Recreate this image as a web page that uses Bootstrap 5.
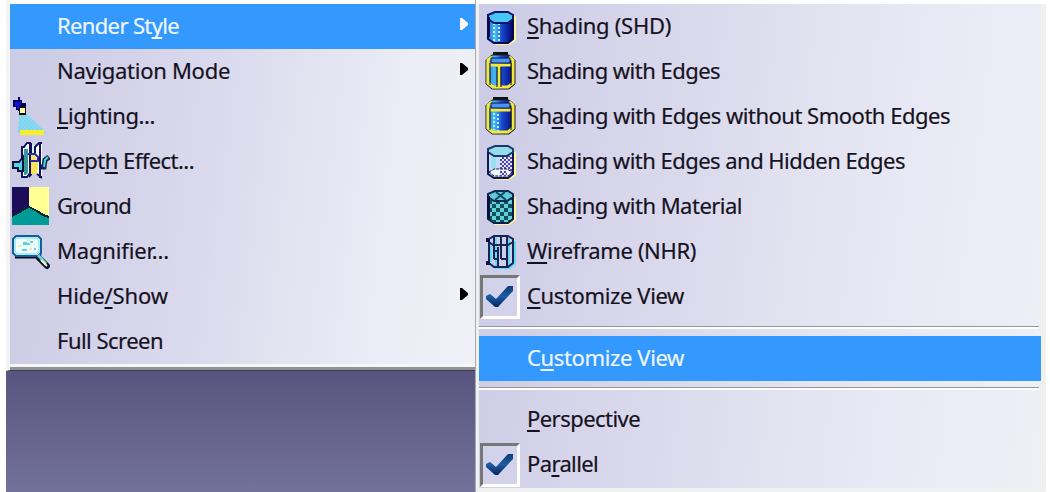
<!DOCTYPE html>
<html lang="en">
<head>
  <meta charset="UTF-8">
  <title>Render Style</title>
  <meta name="viewport" content="width=device-width, initial-scale=1">
  <link href="https://cdn.jsdelivr.net/npm/bootstrap@5.3.3/dist/css/bootstrap.min.css" rel="stylesheet">
  <style>
    body {
      background-color: #fff;
      font-family: "Noto Sans", "Open Sans", sans-serif;
      font-size: 22px;
      line-height: 43px;
      color: #15121f;
    }

    .screen {
      width: 1046px;
      height: 492px;
      padding-left: 6px;
    }

    .left-side {
      width: 469px;
      background: linear-gradient(#58547f 370px, #73729a 492px);
    }

    .main-menu {
      height: 371px;
      padding-top: 4px;
      border-left: 4px solid #f4f4f4;
      border-bottom: 1px solid #3e3b59;
      background: #fff;
    }

    .main-rows {
      height: 360px;
      background: linear-gradient(97deg, #cdcce6 5%, #d9d8ec 40%, #ececf6 80%, #f0f0f8);
    }

    .menu-edge {
      height: 6px;
      border-top: 3px solid #f6f6f6;
      border-bottom: 3px solid #929292;
    }

    .sub-menu {
      padding-top: 4px;
      border-left: 1px solid #aaa;
      background: linear-gradient(#fff 4px, #f0f0f0 4px);
    }

    .sub-rows {
      height: 484px;
      margin-left: 3px;
      margin-right: 5px;
      background: linear-gradient(97deg, #cdcce6 3%, #dad9ec 35%, #e8e8f4 70%, #efeff8);
    }

    .menu-row {
      height: 45px;
      white-space: nowrap;
      -webkit-text-stroke: .2px;
    }

    .menu-row.active {
      background: #3399ff;
      color: #eef6ff;
    }

    .menu-row svg {
      flex: none;
    }

    .icon-box {
      width: 47px;
      height: 45px;
      flex: none;
      line-height: 0;
    }

    .sub-rows .icon-box {
      width: 48px;
      padding-left: 1px;
    }

    .menu-row u {
      text-decoration-thickness: 2px;
      text-underline-offset: 3px;
      text-decoration-skip-ink: none;
    }

    .arrow {
      margin: 14px 7px 0 auto;
    }

    .tick-box {
      width: 40px;
      height: 44px;
      margin-top: 1px;
      border: 3px solid #fff;
      border-top-color: #777;
      border-left-color: #777;
      background: #d2d2eb;
    }

    .menu-line {
      height: 17px;
      padding: 7px 2px 0 0;
    }

    .menu-line.after {
      height: 16px;
      padding-top: 6px;
    }

    .menu-line div {
      height: 3px;
      border-top: 1px solid #969696;
      background: #fff;
    }
  </style>
</head>
<body>

<svg width="0" height="0" class="position-absolute">
  <defs>
    <linearGradient id="blueSide">
      <stop offset="0" stop-color="#2878dc"/>
      <stop offset=".3" stop-color="#48b8f4"/>
      <stop offset=".55" stop-color="#1648d0"/>
      <stop offset="1" stop-color="#060468"/>
    </linearGradient>
    <linearGradient id="tickFill" x2="0" y2="1">
      <stop offset="0" stop-color="#103c70"/>
      <stop offset=".5" stop-color="#1c5ca4"/>
      <stop offset="1" stop-color="#08255c"/>
    </linearGradient>
    <pattern id="dots" width="4" height="4" patternUnits="userSpaceOnUse">
      <path fill="#7ce0f4" d="M0 0h4v4H0z"/>
      <path fill="#8fcdec" d="M0 0h2v2H0zM2 2h2v2H2z"/>
    </pattern>
    <pattern id="mesh" width="4" height="4" patternUnits="userSpaceOnUse">
      <path fill="#e8e6fa" d="M0 0h4v4H0z"/>
      <path fill="#4940b4" d="M0 0h2v2H0zM2 2h2v2H2z"/>
    </pattern>
    <pattern id="checks" width="8" height="8" patternUnits="userSpaceOnUse">
      <path fill="#63d0d8" d="M0 0h8v8H0z"/>
      <path fill="#11515f" d="M0 0h4v4H0zM4 4h4v4H4z"/>
    </pattern>
  </defs>
</svg>

<div class="screen d-flex">
  <div class="left-side">
    <div class="main-menu">
      <div class="main-rows">
        <div class="menu-row d-flex active">
          <div class="icon-box"></div>
          <span data-width="122">Render St<u>y</u>le</span>
          <svg class="arrow" width="8" height="13"><path fill="#fff" d="M0 0h2l6 5v2l-6 5H0z"/></svg>
        </div>
        <div class="menu-row d-flex">
          <div class="icon-box"></div>
          <span data-width="173">Na<u>v</u>igation Mode</span>
          <svg class="arrow" width="8" height="13"><path d="M0 0h2l6 5v2l-6 5H0z"/></svg>
        </div>
        <div class="menu-row d-flex">
          <div class="icon-box">
            <!-- spot light -->
            <svg width="40" height="45">
              <path fill="url(#dots)" d="M9 20h8l20 19H8z"/>
              <path fill="#f8ee30" d="M10 36h24v5H10z"/>
              <path fill="#000060" d="M8 3h2v3h2v3h4v8H8v-1H6v-3H3V6h5z"/>
              <path fill="#1010d8" d="M5 8h6v3H9v4H7v-3H5z"/>
              <path fill="#111" d="M9 12h7v9H9z"/>
              <path fill="#fffbb0" d="M10 14h5v5h-5z"/>
            </svg>
          </div>
          <span data-width="98"><u>L</u>ighting...</span>
        </div>
        <div class="menu-row d-flex">
          <div class="icon-box">
            <!-- sliced box -->
            <svg width="40" height="45">
              <path fill="#fff" stroke="#11115c" stroke-width="2" d="M12 8h2l3-4h3v30l-3 4h-5z"/>
              <path fill="#38989c" d="M14 10h4v24l-2 2h-2z"/>
              <path fill="#11115c" d="M19 4h3v32l-3 3z"/>
              <path fill="#d4f3f6" d="M22 6h4v10h-4z"/>
              <path fill="#f8e35c" d="M21 16h8v19h-8z"/>
              <path fill="#fff" stroke="#11115c" stroke-width="2" d="M25 14V8l4-4h2v34l-4-3"/>
              <path fill="#11115c" d="M29 4h3v35h-3z"/>
              <path fill="#fff" d="M31 5h1v32h-1z"/>
              <path fill="#f8e35c" d="M21 19h7v12h-7z"/>
              <path fill="none" stroke="#2828b0" stroke-width="2" d="M18 15h7l3 3v4h-8"/>
              <path fill="#50d4e0" stroke="#101040" stroke-width="2" d="M3 23h6l4-5v14H8v-3H3z"/>
              <path fill="none" stroke="#102848" stroke-width="5" d="M39 18l-4 3-1 7h-3"/>
              <path fill="none" stroke="#50d4e0" stroke-width="2" d="M38 18l-3 3-1 7"/>
            </svg>
          </div>
          <span data-width="137">Dept<u>h</u> Effect...</span>
        </div>
        <div class="menu-row d-flex">
          <div class="icon-box">
            <svg width="40" height="45" shape-rendering="crispEdges">
              <path fill="#1b0d59" d="M2 3h17v31H2z"/>
              <path fill="#ffff93" d="M19 3h20v31H19z"/>
              <path fill="#009a98" d="M2 32l6-3 5-3 6-3 8 4 6 4 6 2v8H2z"/>
              <path fill="none" stroke="#042c30" stroke-width="2" d="M2 32l6-3 5-3 6-3 8 4 6 4 6 2"/>
            </svg>
          </div>
          <span data-width="74">Ground</span>
        </div>
        <div class="menu-row d-flex">
          <div class="icon-box">
            <!-- magnifying glass -->
            <svg width="40" height="45">
              <path fill="none" stroke="#050a20" stroke-width="3" d="M5 28h21l5-3"/>
              <path fill="#eefcff" stroke="#115f96" stroke-width="2" d="M6 7h22l3 3v14l-3 3H6l-3-3V10z"/>
              <path fill="none" stroke="#67deee" stroke-width="1" d="M7 9h20l2 3v11l-2 2H7l-2-3V11z"/>
              <path fill="#58d7e3" d="M13 13h4v3h-4zM20 12h3v2h-3zM17 14h3v2h-3zM12 20h5v2h-5zM24 19h2v2h-2z"/>
              <path fill="#f8eb9c" d="M17 10h3v2h-3zM8 16h3v2H8zM19 19h3v2h-3z"/>
              <path fill="none" stroke="#07102c" stroke-width="6" stroke-linecap="round" d="M29 29l8 8"/>
              <path fill="none" stroke="#60d4e2" stroke-width="3" d="M28 26l8 9"/>
              <path fill="none" stroke="#fff8b0" stroke-width="2" d="M31 31l6 6"/>
            </svg>
          </div>
          <span data-width="112">Magnifier...</span>
        </div>
        <div class="menu-row d-flex">
          <div class="icon-box"></div>
          <span data-width="111">Hide<u>/</u>Show</span>
          <svg class="arrow" width="8" height="13"><path d="M0 0h2l6 5v2l-6 5H0z"/></svg>
        </div>
        <div class="menu-row d-flex">
          <div class="icon-box"></div>
          <span data-width="106">Full Screen</span>
        </div>
      </div>
      <div class="menu-edge"></div>
    </div>
  </div>

  <div class="sub-menu flex-grow-1">
    <div class="sub-rows">
      <div class="menu-row d-flex">
        <div class="icon-box">
          <svg width="40" height="45">
            <path fill="none" stroke="#fff59a" stroke-width="2" d="M35 12v24l-6 4H15"/>
            <path fill="url(#blueSide)" stroke="#080850" stroke-width="2" d="M8 11v24l6 4h14l5-4V11z"/>
            <path fill="none" stroke="#b8f4ff" stroke-width="2" stroke-dasharray="2 2" d="M14 19v18M19 19v18"/>
            <path fill="#48c5f5" stroke="#0c1868" stroke-width="2" d="M15 8h13l5 3v4l-5 4H14l-6-4v-4z"/>
            <path fill="#080850" d="M7 13h3v20H7z"/>
          </svg>
        </div>
        <span data-width="144"><u>S</u>hading (SHD)</span>
      </div>
      <div class="menu-row d-flex">
        <div class="icon-box">
          <svg width="40" height="45">
            <path fill="#111" d="M13 3h15v5H13z"/>
            <path fill="url(#blueSide)" stroke="#222" stroke-width="1" d="M12 6h17l6 5v24l-6 5H12l-6-5V11z"/>
            <path fill="none" stroke="#f6e838" stroke-width="3" d="M12 8l-4 3v23l5 4h15l5-4V11l-4-3M19 16v22M10 16h21"/>
            <path fill="#4a95ee" stroke="#081050" d="M11 9h19v5H11z"/>
            <path fill="none" stroke="#111" stroke-width="1" d="M10 14v22M17 18v20M21 18v20M31 14v22"/>
          </svg>
        </div>
        <span data-width="193">S<u>h</u>ading with Edges</span>
      </div>
      <div class="menu-row d-flex">
        <div class="icon-box">
          <svg width="40" height="45">
            <path fill="#111" d="M13 3h15v5H13z"/>
            <path fill="url(#blueSide)" stroke="#222" stroke-width="1" d="M12 6h17l6 5v24l-6 5H12l-6-5V11z"/>
            <path fill="none" stroke="#f6e838" stroke-width="3" d="M12 8l-4 3v23l5 4h15l5-4V11l-4-3M10 16h21"/>
            <path fill="#4a95ee" stroke="#081050" d="M11 9h19v5H11z"/>
            <path fill="none" stroke="#a5f4ff" stroke-width="2" stroke-dasharray="2 2" d="M14 19v17M18 20v17"/>
            <path fill="none" stroke="#111" stroke-width="1" d="M10 14v22M31 14v22"/>
          </svg>
        </div>
        <span data-width="423">Sh<u>a</u>ding with Edges without Smooth Edges</span>
      </div>
      <div class="menu-row d-flex">
        <div class="icon-box">
          <svg width="40" height="45">
            <path fill="none" stroke="#fff59a" stroke-width="2" d="M35 13v23l-6 4H15"/>
            <path fill="#c0dcf8" stroke="#15154f" stroke-width="2" d="M8 11v24l6 4h14l5-4V11z"/>
            <path fill="url(#mesh)" d="M20 17h12v18l-4 2h-8z"/>
            <path fill="#9adff0" d="M11 18h5v11h-5z"/>
            <path fill="#eef8fa" stroke="#15154f" stroke-width="1" stroke-dasharray="3 1" d="M9 33l5-3h13l5 3-4 4H14z"/>
            <path fill="url(#mesh)" d="M20 32h7v5h-7z"/>
            <path fill="#95dce8" stroke="#1a3870" stroke-width="2" d="M15 7h13l5 3v3l-6 4H14l-6-4v-3z"/>
            <path fill="#15154f" d="M7 13h2v21H7z"/>
          </svg>
        </div>
        <span data-width="378">Sha<u>d</u>ing with Edges and Hidden Edges</span>
      </div>
      <div class="menu-row d-flex">
        <div class="icon-box">
          <svg width="40" height="45">
            <path fill="none" stroke="#fff59a" stroke-width="2" d="M35 13v23l-6 4H15"/>
            <path fill="url(#checks)" stroke="#082048" stroke-width="2" d="M8 11v24l6 4h14l5-4V11z"/>
            <path fill="#63c8d8" stroke="#0a2c54" stroke-width="2" d="M15 7h13l5 3v3l-6 4H14l-6-4v-3z"/>
            <path fill="none" stroke="#0e4b66" stroke-width="2" d="M16 8l10 8M25 8l-10 8"/>
            <path fill="#071040" d="M7 12h3v23H7z"/>
          </svg>
        </div>
        <span data-width="215">Shad<u>i</u>ng with Material</span>
      </div>
      <div class="menu-row d-flex">
        <div class="icon-box">
          <svg width="40" height="45">
            <path fill="none" stroke="#61dcf4" stroke-width="2" d="M16 9v29M29 9v29M35 12v23l-5 4H14M11 17v16"/>
            <path fill="none" stroke="#152458" stroke-width="2" d="M14 7h14l5 3v3l-5 3H13l-4-3v-3zM9 12v22l5 4h14l5-4V12M14 8v22M21 7v23M27 8v30M18 18v20M14 30h4M21 30h6M14 22h4"/>
            <path fill="#0b1545" d="M6 9h4v4H6zM6 32h4v4H6z"/>
          </svg>
        </div>
        <span data-width="169"><u>W</u>ireframe (NHR)</span>
      </div>
      <div class="menu-row d-flex">
        <div class="icon-box">
          <div class="tick-box">
            <svg width="34" height="38"><path fill="url(#tickFill)" d="M3 18l4-2 6 5L25 8h5v5L15 29h-3L3 21z"/></svg>
          </div>
        </div>
        <span data-width="157"><u>C</u>ustomize View</span>
      </div>
      <div class="menu-line"><div></div></div>
      <div class="menu-row d-flex active">
        <div class="icon-box"></div>
        <span data-width="157">C<u>u</u>stomize View</span>
      </div>
      <div class="menu-line after"><div></div></div>
      <div class="menu-row d-flex">
        <div class="icon-box"></div>
        <span data-width="113"><u>P</u>erspective</span>
      </div>
      <div class="menu-row d-flex">
        <div class="icon-box">
          <div class="tick-box">
            <svg width="34" height="38"><path fill="url(#tickFill)" d="M3 18l4-2 6 5L25 8h5v5L15 29h-3L3 21z"/></svg>
          </div>
        </div>
        <span data-width="71">Pa<u>r</u>allel</span>
      </div>
    </div>
  </div>
</div>

<script src="https://cdn.jsdelivr.net/npm/bootstrap@5.3.3/dist/js/bootstrap.bundle.min.js"></script>
<script>
  // space the letters so each label takes its own width
  document.querySelectorAll('[data-width]').forEach(label => {
    const extra = label.dataset.width - label.getBoundingClientRect().width;
    label.style.letterSpacing = `${extra / label.textContent.length}px`;
  });
</script>

</body>
</html>
